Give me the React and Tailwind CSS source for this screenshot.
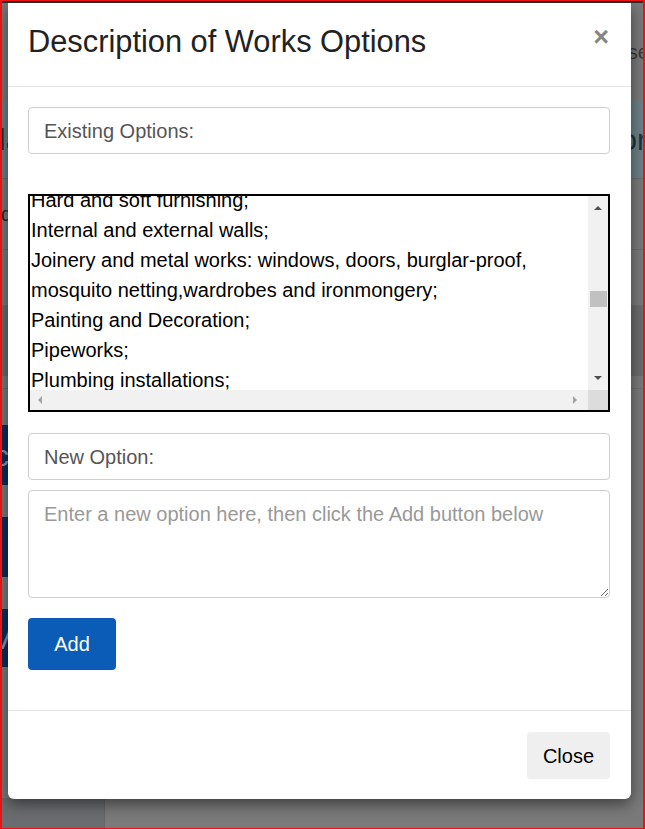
export default function App() {
  const lines = [
    "Hard and soft furnishing;",
    "Internal and external walls;",
    "Joinery and metal works: windows, doors, burglar-proof,",
    "mosquito netting,wardrobes and ironmongery;",
    "Painting and Decoration;",
    "Pipeworks;",
    "Plumbing installations;",
  ];
  return (
    <div className="relative w-[645px] h-[829px] overflow-hidden bg-[#7a7a7a] border-l-2 border-r-2 border-t border-b border-[#ee1111] font-['Liberation_Sans',Arial,sans-serif]">
      {/* dimmed page behind the modal */}
      <div className="flex flex-col h-full">
        <div className="h-[2px] bg-[#2b2b2b]"></div>
        <div className="h-[97px] flex items-center justify-end text-[20px] text-[#3a3a3a]">
          <span className="-mr-[6px]">Close</span>
        </div>
        <div className="h-[78px] bg-[#6d8186] flex items-center justify-between text-[30px] text-[#1b3540]">
          <span className="-ml-[3px]">la</span>
          <span className="-mr-[4px]">or</span>
        </div>
        <div className="h-[72px] border-t border-b border-[#6e6e6e] flex items-center text-[20px] text-[#2a2a2a]">
          <span className="-ml-[1px]">d</span>
        </div>
        <div className="h-[56px] border-b border-[#6e6e6e]"></div>
        <div className="h-[70px] bg-[#6c6c6c]"></div>
        <div className="h-[13px] border-b border-[#6e6e6e]"></div>
        <div className="h-[36px]"></div>
        <div className="flex flex-col gap-[32px]">
          <div className="h-[60px] w-[100px] bg-[#0c2d5a] flex items-center text-[30px] text-[#8796ad]">
            <span className="-ml-[8px]">c</span>
          </div>
          <div className="h-[60px] w-[100px] bg-[#0c2d5a]"></div>
          <div className="h-[58px] w-[100px] bg-[#0c2d5a] flex items-center text-[30px] text-[#8796ad]">
            <span className="-ml-[10px]">Vo</span>
          </div>
        </div>
        <div className="flex-1"></div>
        <div className="h-[30px] flex">
          <div className="w-[103px] bg-[#6b6c70] border-r border-[#666]"></div>
        </div>
      </div>

      {/* modal */}
      <div className="absolute left-[6px] top-[2px] w-[623px] bg-white rounded-b-[6px] shadow-[0_5px_15px_rgba(0,0,0,0.5)] flex flex-col">
        <div className="h-[84px] border-b border-[#e5e5e5] flex items-start justify-between pl-[20px] pr-[22px] pt-[21px]">
          <h4 className="text-[30.8px] leading-[33px] mt-[1px] text-[#222]">Description of Works Options</h4>
          <span className="text-[27px] leading-[27px] font-bold text-[#868686]">×</span>
        </div>
        <div className="pl-[20px] pr-[21px] pt-[20px] pb-[40px] flex flex-col">
          <div className="h-[47px] border border-[#cfcfcf] rounded-[4px] px-[15px] flex items-center text-[20px] text-[#555]">
            Existing Options:
          </div>
          <div className="mt-[40px] h-[218px] border-2 border-black flex flex-col">
            <div className="flex flex-1 min-h-0">
              <div className="flex-1 overflow-hidden pl-[1px]">
                <div className="-mt-[11px] text-[20px] leading-[30px] text-black whitespace-nowrap">
                  {lines.map((l) => (
                    <div key={l}>{l}</div>
                  ))}
                </div>
              </div>
              <div className="w-[20px] bg-[#f1f1f1] flex flex-col">
                <div className="h-[24px] flex items-center justify-center">
                  <div className="w-0 h-0 border-x-[4px] border-x-transparent border-b-[4px] border-b-[#505050]"></div>
                </div>
                <div className="flex-1 flex flex-col items-center">
                  <div className="mt-[71px] w-[17px] h-[16px] bg-[#c1c1c1]"></div>
                </div>
                <div className="h-[24px] flex items-center justify-center">
                  <div className="w-0 h-0 border-x-[4px] border-x-transparent border-t-[4px] border-t-[#505050]"></div>
                </div>
              </div>
            </div>
            <div className="h-[20px] flex">
              <div className="flex-1 bg-[#f1f1f1] flex items-center justify-between pl-[8px] pr-[11px]">
                <div className="w-0 h-0 border-y-[4px] border-y-transparent border-r-[4px] border-r-[#a3a3a3]"></div>
                <div className="w-0 h-0 border-y-[4px] border-y-transparent border-l-[4px] border-l-[#a3a3a3]"></div>
              </div>
              <div className="w-[20px] bg-[#dcdcdc]"></div>
            </div>
          </div>
          <div className="mt-[21px] h-[47px] border border-[#cfcfcf] rounded-[4px] px-[15px] flex items-center text-[20px] text-[#555]">
            New Option:
          </div>
          <textarea
            className="mt-[10px] h-[108px] w-full border border-[#cfcfcf] rounded-[4px] px-[15px] pt-[8px] text-[20px] leading-[30px] text-[#555] placeholder:text-[#999] outline-none"
            placeholder="Enter a new option here, then click the Add button below"
          ></textarea>
          <div className="mt-[20px]">
            <button className="w-[88px] h-[52px] bg-[#0b5cb7] text-white text-[20px] rounded-[4px]">Add</button>
          </div>
        </div>
        <div className="border-t border-[#e5e5e5] pt-[21px] pb-[20px] pl-[20px] pr-[21px] flex justify-end">
          <button className="w-[83px] h-[47px] bg-[#efefef] rounded-[4px] text-[20px] text-black">Close</button>
        </div>
      </div>
    </div>
  );
}
